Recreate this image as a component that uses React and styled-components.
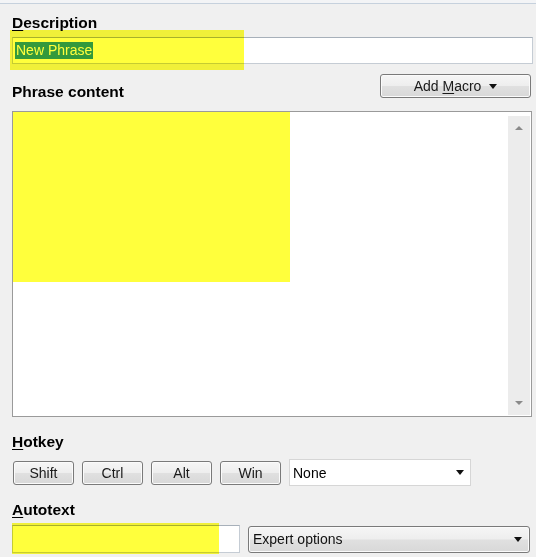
import React from "react";
import styled, { createGlobalStyle } from "styled-components";

const Global = createGlobalStyle`
  html, body { margin: 0; padding: 0; background: #f0f0f0; }
  body { font-family: "Liberation Sans", Arial, sans-serif; }
`;

const Page = styled.div`
  width: 536px;
  height: 557px;
  overflow: hidden;
  box-sizing: border-box;
  background: #f0f0f0;
  padding: 0 3px 0 12px;
  display: flex;
  flex-direction: column;
  position: relative;
  isolation: isolate;
`;

const TopRule = styled.div`
  height: 3px;
  margin: 0 -3px 0 -12px;
  background: #f3f4f6;
  border-bottom: 1px solid #c6d1dd;
  flex: none;
`;

const Label = styled.div`
  font-size: 15.5px;
  font-weight: bold;
  line-height: 18px;
  color: #000;
  margin-top: ${(p) => p.$gap || 0}px;
  padding-top: ${(p) => p.$pad || 0}px;
  white-space: nowrap;
`;

const Key = styled.span`
  text-decoration: underline;
  text-underline-offset: 2px;
`;

const Field = styled.div`
  position: relative;
  margin-top: ${(p) => p.$gap || 0}px;
  flex: none;
`;

const TextBox = styled.div`
  box-sizing: border-box;
  height: ${(p) => p.$h || 27}px;
  width: ${(p) => (p.$w ? `${p.$w}px` : "100%")};
  background: #fff;
  border: 1px solid #c5ccd4;
  border-top-color: #a7b0ba;
  display: flex;
  align-items: center;
  padding-left: 2px;
  font-size: 14px;
  color: #000;
`;

const Selected = styled.span`
  background: #3399ff;
  color: #fff;
  line-height: 17px;
  padding: 0 1px;
`;

const Marker = styled.div`
  position: absolute;
  background: #ffff3c;
  mix-blend-mode: multiply;
  pointer-events: none;
`;

const HeadRow = styled.div`
  display: flex;
  justify-content: space-between;
  align-items: flex-start;
  margin-top: 10px;
  flex: none;
`;

const Button = styled.button`
  box-sizing: border-box;
  width: ${(p) => p.$w}px;
  height: 24px;
  margin: 0 ${(p) => p.$mr || 0}px 0 0;
  padding: 0;
  border: 1px solid #7a7a7a;
  border-radius: 3px;
  background: linear-gradient(#f6f6f6, #eeeeee 48%, #e0e0e0 52%, #d8d8d8);
  box-shadow: inset 0 0 0 1px #fbfbfb;
  font-family: "Liberation Sans", Arial, sans-serif;
  font-size: 14px;
  color: #1a1a1a;
  display: flex;
  align-items: center;
  justify-content: center;
  gap: 8px;
  flex: none;
`;

const Caret = styled.span`
  width: 0;
  height: 0;
  border-left: 4px solid transparent;
  border-right: 4px solid transparent;
  border-top: 5px solid #111;
  flex: none;
`;

const Editor = styled.div`
  position: relative;
  margin: 10px 1px 0 0;
  height: 306px;
  box-sizing: border-box;
  border: 1px solid #9a9a9a;
  background: #fff;
  display: flex;
  flex: none;
`;

const EditArea = styled.div`
  flex: 1;
`;

const ScrollBar = styled.div`
  width: 22px;
  margin: 4px 1px 1px 0;
  background: #ececec;
  display: flex;
  flex-direction: column;
  justify-content: space-between;
  align-items: center;
  padding: 10px 0 10px;
  box-sizing: border-box;
`;

const ScrollArrow = styled.span`
  width: 0;
  height: 0;
  border-left: 4px solid transparent;
  border-right: 4px solid transparent;
  ${(p) =>
    p.$up
      ? "border-bottom: 4px solid #8a8a8a;"
      : "border-top: 4px solid #8a8a8a;"}
`;

const KeyRow = styled.div`
  display: flex;
  align-items: center;
  gap: 8px;
  margin-top: 8px;
  padding-left: 1px;
  height: 27px;
  flex: none;
`;

const DropBox = styled.div`
  box-sizing: border-box;
  width: ${(p) => p.$w}px;
  height: 27px;
  background: #fff;
  border: 1px solid #d6d6d6;
  display: flex;
  align-items: center;
  justify-content: space-between;
  padding: 0 6px 0 3px;
  font-size: 14px;
  color: #000;
  flex: none;
`;

const DropButton = styled.div`
  box-sizing: border-box;
  width: ${(p) => p.$w}px;
  height: 27px;
  border: 1px solid #7a7a7a;
  border-radius: 3px;
  background: linear-gradient(#f6f6f6, #eeeeee 48%, #e0e0e0 52%, #d8d8d8);
  box-shadow: inset 0 0 0 1px #fbfbfb;
  display: flex;
  align-items: center;
  justify-content: space-between;
  padding: 0 7px 0 4px;
  font-size: 14px;
  color: #111;
  flex: none;
`;

const AutoRow = styled.div`
  display: flex;
  align-items: center;
  gap: 8px;
  margin-top: 6px;
  flex: none;
`;

export default function App() {
  return (
    <>
      <Global />
      <Page>
        <TopRule />
        <Label $gap={10}>
          <Key>D</Key>escription
        </Label>
        <Field $gap={5}>
          <TextBox>
            <Selected>New Phrase</Selected>
          </TextBox>
          <Marker style={{ left: -2, top: -7, width: 234, height: 40 }} />
        </Field>
        <HeadRow>
          <Label $pad={9}>Phrase content</Label>
          <Button $w={151} $mr={2}>
            <span>
              Add <Key>M</Key>acro
            </span>
            <Caret />
          </Button>
        </HeadRow>
        <Editor>
          <EditArea />
          <ScrollBar>
            <ScrollArrow $up />
            <ScrollArrow />
          </ScrollBar>
          <Marker style={{ left: 0, top: 0, width: 277, height: 170 }} />
        </Editor>
        <Label $gap={16}>
          <Key>H</Key>otkey
        </Label>
        <KeyRow>
          <Button $w={61}>Shift</Button>
          <Button $w={61}>Ctrl</Button>
          <Button $w={61}>Alt</Button>
          <Button $w={61}>Win</Button>
          <DropBox $w={182}>
            <span>None</span>
            <Caret />
          </DropBox>
        </KeyRow>
        <Label $gap={15}>
          <Key>A</Key>utotext
        </Label>
        <AutoRow>
          <Field>
            <TextBox $w={228} $h={28} />
            <Marker style={{ left: 0, top: -2, width: 207, height: 31 }} />
          </Field>
          <DropButton $w={282}>
            <span>Expert options</span>
            <Caret />
          </DropButton>
        </AutoRow>
      </Page>
    </>
  );
}
